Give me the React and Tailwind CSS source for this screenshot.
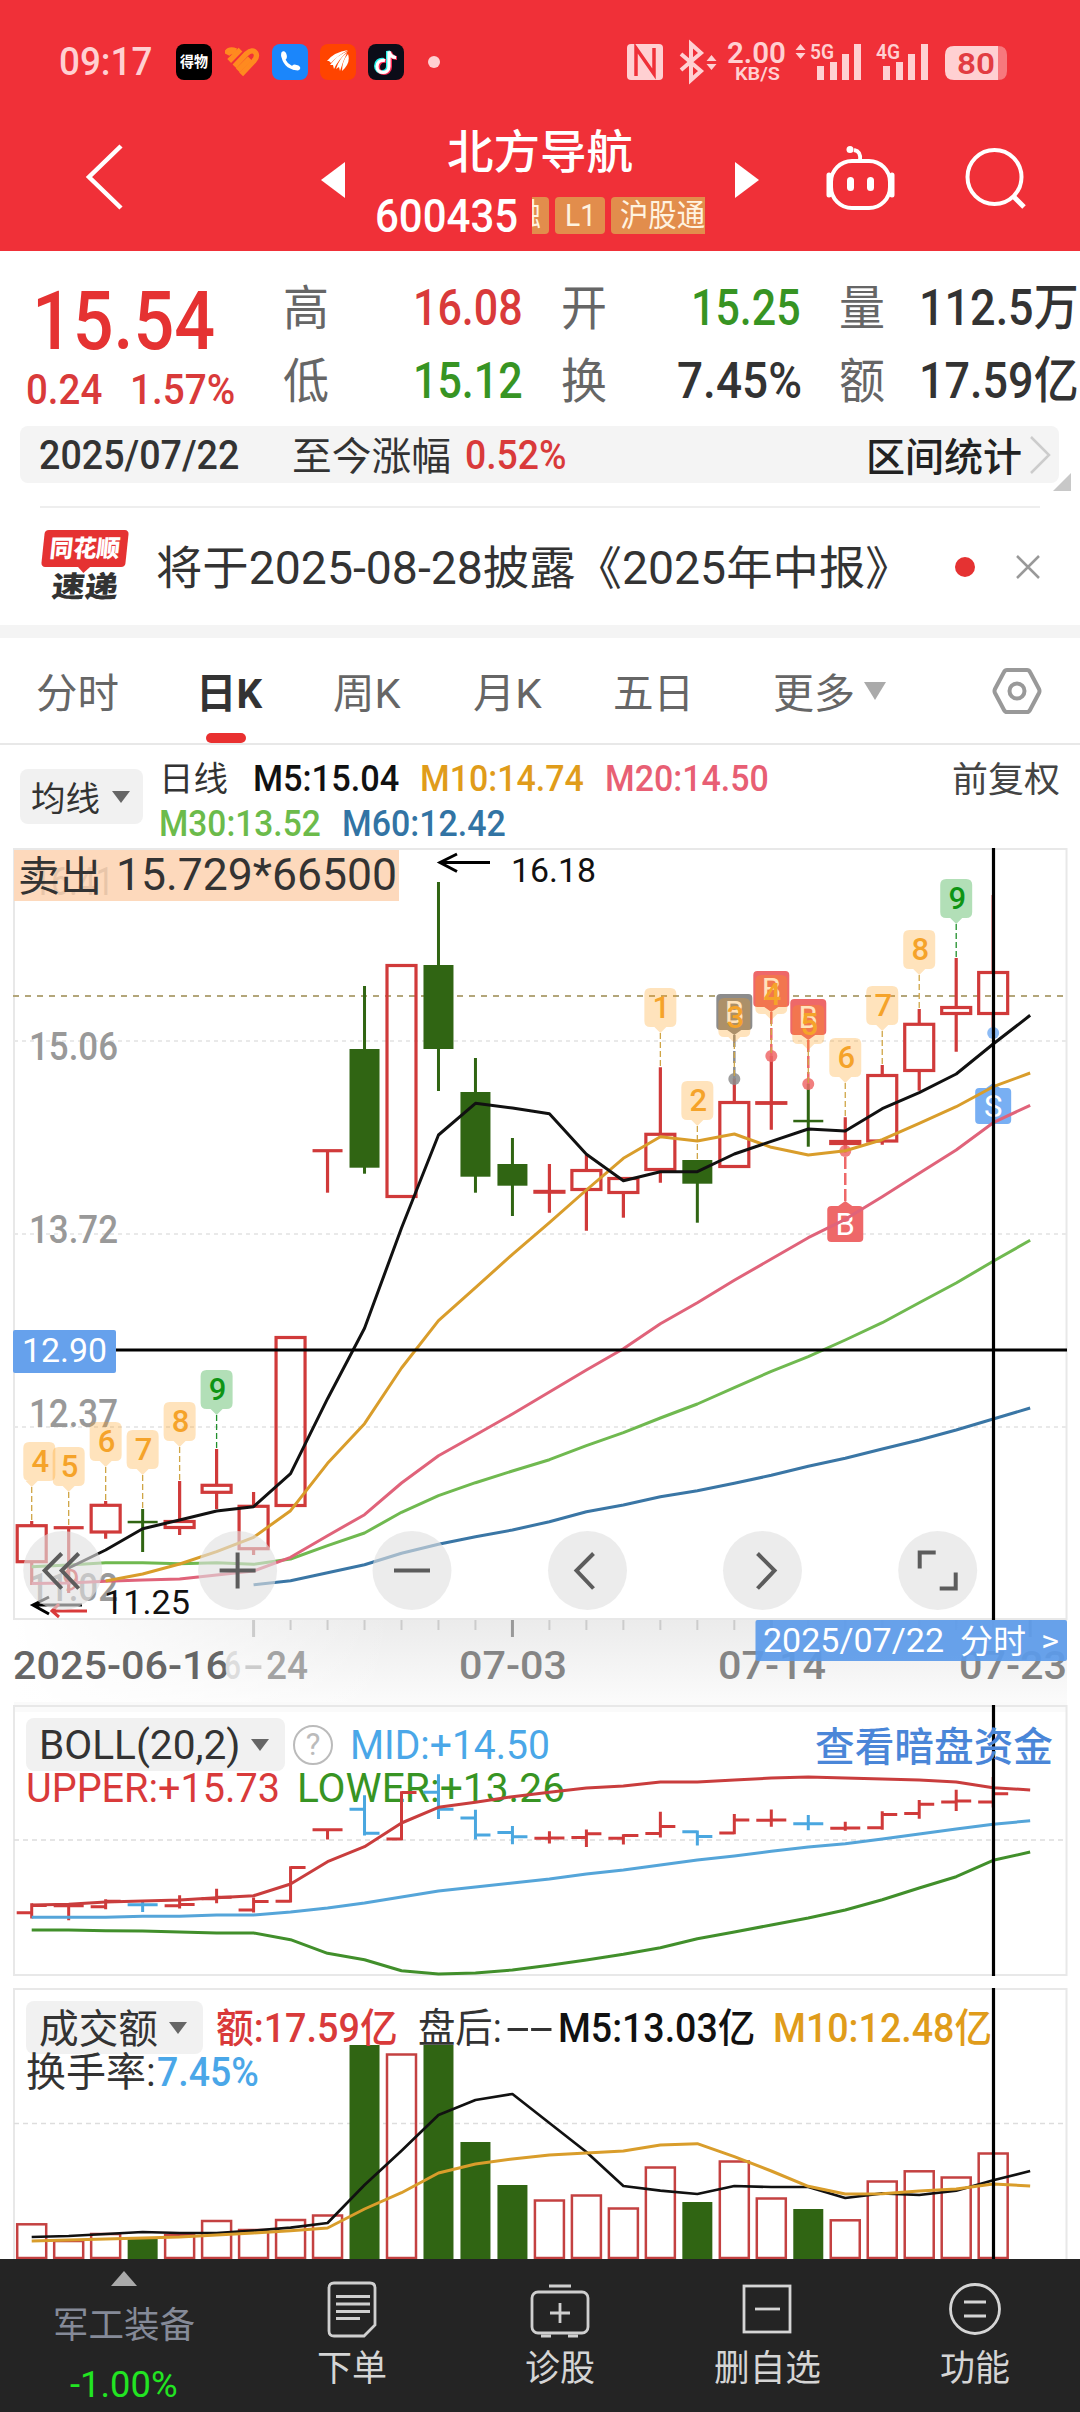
import React, { useLayoutEffect, useRef } from "react";
import clsx from "clsx";

// ---------- data ----------

const STEP = 36.98;
const X0 = 31.7;
const cx = (i) => X0 + STEP * i;

// [direction, high, top, bottom, low]
const candles = [
  ["up", 1521, 1525.7, 1561.7, 1585],
  ["up", 1527.7, 1527.7, 1527.7, 1593],
  ["up", 1501, 1505.3, 1532, 1538.7],
  ["down", 1509, 1522, 1522, 1552],
  ["up", 1481, 1521.5, 1527.5, 1535],
  ["up", 1449, 1485.3, 1492.3, 1509],
  ["up", 1492, 1506.3, 1548.7, 1555],
  ["up", 1337.5, 1337.5, 1505.5, 1505.5],
  ["up", 1150.7, 1150.7, 1150.7, 1192.7],
  ["down", 986, 1049, 1167.7, 1173.7],
  ["up", 965.5, 965.5, 1196.5, 1196.5],
  ["down", 882, 965, 1049, 1091],
  ["down", 1058, 1092, 1176.7, 1192.7],
  ["down", 1138, 1164, 1185.7, 1216],
  ["up", 1164, 1191.4, 1192.2, 1212.7],
  ["up", 1155, 1170.5, 1189.5, 1230.7],
  ["up", 1178.5, 1178.5, 1192.5, 1217.7],
  ["up", 1067.3, 1134.3, 1169.5, 1182.7],
  ["down", 1160, 1160, 1183.7, 1222.7],
  ["up", 1078, 1102.5, 1166.5, 1166.5],
  ["up", 1056, 1102.7, 1103.3, 1129.7],
  ["down", 1084, 1121, 1121, 1146.7],
  ["up", 1117.3, 1141.5, 1143.5, 1150],
  ["up", 1065, 1075.5, 1141, 1144.7],
  ["up", 1009, 1024.3, 1070.5, 1090.7],
  ["up", 958, 1007.5, 1013.5, 1051.7],
  ["up", 895, 972.5, 1013.5, 1034],
];

const ma5 = [1580, 1568, 1550, 1528.7, 1520, 1511, 1506.7, 1473.7, 1398.7, 1328.3, 1228, 1135, 1103.3, 1108, 1113.7, 1154.3, 1180.7, 1171.7, 1171.7, 1154, 1141.3, 1129, 1131, 1108.7, 1092.7, 1074, 1044, 1015.3];
const ma10 = [1581, 1574, 1564, 1551.7, 1537.3, 1510.7, 1463.3, 1423.7, 1368, 1320.7, 1287.7, 1254.3, 1222.7, 1190, 1158.3, 1136.7, 1141, 1134, 1147.3, 1155, 1150.7, 1139.7, 1123.3, 1106.7, 1086.7, 1073];
const ma20 = [1583.5, 1583, 1581.3, 1580, 1579, 1575, 1571, 1557.3, 1535.7, 1514.7, 1483, 1455.7, 1435, 1414, 1392, 1370, 1348.7, 1323.7, 1302.7, 1280.3, 1259, 1237.7, 1219.3, 1196.7, 1173.3, 1150, 1122.7, 1105.3];
const ma30 = [1566.7, 1565, 1562.7, 1562.7, 1563.7, 1562.7, 1564.3, 1559, 1545.7, 1533, 1512.3, 1495.7, 1482.7, 1471, 1459.7, 1445.7, 1432.7, 1418, 1404, 1387.7, 1371.3, 1356.7, 1340, 1322.7, 1302.7, 1283, 1261.3, 1240.3];
const ma60 = [1584.7, 1580.7, 1572.7, 1564.7, 1553.3, 1544.3, 1536.7, 1530, 1521.7, 1511.7, 1505, 1496.7, 1490.7, 1483.3, 1475.3, 1466.3, 1458.3, 1449, 1440, 1430, 1419, 1408];

const bollUp = [1905, 1904.3, 1902, 1901, 1900, 1897.7, 1895.7, 1884, 1861.7, 1846.7, 1823, 1807.3, 1802.3, 1796.7, 1792.3, 1788, 1786, 1782, 1782, 1780, 1778, 1777, 1778, 1779, 1780, 1782, 1787.7, 1790];
const bollMid = [1917.3, 1917.3, 1917.3, 1916.3, 1916.3, 1915, 1915, 1912, 1908, 1903, 1897, 1891, 1887, 1883, 1879, 1874, 1870, 1865, 1860, 1856, 1851.3, 1847, 1843.7, 1839, 1834, 1829, 1824.3, 1820.7];
const bollLow = [1930, 1930, 1930.7, 1931, 1932, 1933, 1933, 1939.7, 1953.3, 1959.7, 1970.7, 1974, 1973, 1970, 1965.3, 1960, 1954.3, 1947.7, 1938.7, 1932, 1925, 1918, 1910, 1899.7, 1888, 1876.7, 1860.3, 1852];

const volTops = [2224.3, 2241, 2234, 2239, 2235, 2221, 2230, 2220, 2215.5, 2045, 2054.5, 2045, 2142, 2185, 2200.5, 2195.5, 2208.5, 2167.5, 2202, 2161.5, 2198.5, 2209, 2220.3, 2181.5, 2171.3, 2177.5, 2153.5];
const volMa5 = [2237, 2236, 2234, 2232, 2233, 2233, 2230.7, 2227.7, 2223, 2185, 2150.7, 2115, 2100, 2094, 2123, 2152, 2186, 2190.7, 2194, 2186, 2187, 2187, 2198, 2193.3, 2195, 2190.7, 2180.3, 2171];
const volMa10 = [2241, 2240, 2239, 2238, 2237, 2235, 2233, 2230.7, 2228, 2209, 2192.7, 2173, 2164, 2159, 2155, 2153, 2151, 2145, 2143.7, 2156.7, 2171, 2186.3, 2194, 2193.7, 2191, 2189, 2184, 2186];

// nine-turn sequence marks: [candle, label, top of bubble]
const turns = [
  [0, "4", 1442], [1, "5", 1447], [2, "6", 1422], [3, "7", 1430], [4, "8", 1402], [5, "9", 1370],
  [17, "1", 988], [18, "2", 1081], [19, "3", 998], [20, "4", 975], [21, "5", 1005],
  [22, "6", 1038], [23, "7", 986], [24, "8", 930], [25, "9", 879],
];

// ---------- helpers ----------

// squeezes its text into the width given by the class name
function Fit({ className, children }) {
  const box = useRef(null);
  const inner = useRef(null);
  useLayoutEffect(() => {
    const s = box.current.clientWidth / inner.current.offsetWidth;
    inner.current.style.transform = `scaleX(${s})`;
  });
  return (
    <span ref={box} className={clsx("inline-flex shrink-0 leading-none", className)}>
      <span ref={inner} className="origin-left whitespace-nowrap">{children}</span>
    </span>
  );
}

function Label({ x, y, w, size, fill, weight = 400, children, opacity }) {
  return (
    <text x={x} y={y} fontSize={size} fill={fill} fontWeight={weight} opacity={opacity} textLength={w} lengthAdjust="spacingAndGlyphs">
      {children}
    </text>
  );
}

function Line({ data, from = 0, color, w = 3 }) {
  const points = data.map((y, i) => `${cx(i + from)},${y}`).join(" ");
  return <polyline points={points} fill="none" stroke={color} strokeWidth={w} strokeLinejoin="round" />;
}

function Caret({ className = "text-[#666]" }) {
  return (
    <svg width="18" height="12" viewBox="0 0 18 12" className={className}>
      <path d="M0 0h18L9 12z" fill="currentColor" />
    </svg>
  );
}

// ---------- top ----------

function StatusBar() {
  return (
    <div className="flex h-[124px] items-center pl-[59px] text-[#ffd0d2]">
      <Fit className="w-[93px] text-[38px] font-medium">09:17</Fit>
      <div className="ml-[24px] flex h-[36px] w-[36px] items-center justify-center rounded-[8px] bg-black text-white">
        <Fit className="w-[28px] text-[15px] font-bold">得物</Fit>
      </div>
      <svg className="ml-[13px]" width="35" height="30" viewBox="176 42 104 90">
        <g stroke="#ff8a1f" strokeWidth="16" strokeLinecap="butt" strokeLinejoin="round" fill="none">
          <path d="M180 64Q188 48 208 56" strokeWidth="20" />
          <path d="M188 84L222 50" />
          <path d="M204 100L240 62Q258 46 268 60Q274 72 262 84L224 124" />
          <path d="M214 112L250 76" />
        </g>
      </svg>
      <div className="ml-[12px] flex h-[36px] w-[36px] items-center justify-center rounded-[8px] bg-[#1b86fb]">
        <svg width="22" height="22" viewBox="0 0 22 22">
          <path d="M4 4C4.500 11 9 16.500 17.500 17.500" fill="none" stroke="#fff" strokeWidth="3.400" />
          <ellipse cx="5" cy="4.500" rx="2.700" ry="4.300" fill="#fff" transform="rotate(-14 5 4.500)" />
          <ellipse cx="17" cy="16.500" rx="4.300" ry="2.700" fill="#fff" transform="rotate(14 17 16.500)" />
        </svg>
      </div>
      <div className="ml-[12px] flex h-[36px] w-[36px] items-center justify-center rounded-[8px] bg-[#ff4400]">
        <svg width="24" height="26" viewBox="0 0 24 26" fill="#fff">
          <path d="M1 12Q8 3 22 1Q11 7 5 14L3 12z" />
          <path d="M4 16Q11 6 22 2Q12 11 8 20L7 16z" />
          <path d="M10 20Q14 8 21 4Q17 12 14 22L13 18z" />
          <path d="M16 22Q16 12 22 5Q25 14 16 22z" />
        </svg>
      </div>
      <div className="ml-[12px] flex h-[36px] w-[36px] items-center justify-center rounded-[8px] bg-[#0b0c18]">
        <svg width="26" height="28" viewBox="0 0 26 28" fill="none" strokeWidth="4">
          <path d="M11 12c-5-1-8 2-8 6s3 6 6 6 6-2 6-6V3c1 4 4 6 7 6" stroke="#25f4ee" />
          <path d="M13 13c-5-1-8 2-8 6s3 6 6 6 6-2 6-6V4c1 4 4 6 7 6" stroke="#fe2c55" />
          <path d="M12 12.500c-5-1-8 2-8 6s3 6 6 6 6-2 6-6V3.500c1 4 4 6 7 6" stroke="#fff" strokeWidth="3.200" />
        </svg>
      </div>
      <div className="ml-[24px] h-[12px] w-[12px] rounded-full bg-[#ffd0d2]" />

      <svg className="ml-[187px] overflow-visible" width="380" height="40" viewBox="627 42 380 40" fill="#ffd0d2">
        <rect x="627" y="44" width="36" height="36" rx="4" />
        <path d="M636 76V48l18 26V48" fill="none" stroke="#ef3038" strokeWidth="3.500" />
        <path d="M681 54l20 17-10 9V44l10 9-20 17" fill="none" stroke="#ffd0d2" strokeWidth="4" />
        <path d="M711.500 55l5 6h-10zM711.500 70l5-6h-10z" />
        <Label x="727" y="63" w="59" size="29" fill="#ffd0d2" weight="600">2.00</Label>
        <Label x="735" y="80" w="45" size="19" fill="#ffd0d2" weight="600">KB/S</Label>
        <path d="M800.500 44l5 6h-10zM800.500 59l5-6h-10z" />
        <Label x="810" y="59" w="24" size="21" fill="#ffd0d2" weight="600">5G</Label>
        <path d="M817 66h7v14h-7zM830 62h7v18h-7zM842 54h7v26h-7zM854 44h7v36h-7z" />
        <Label x="876" y="59" w="24" size="21" fill="#ffd0d2" weight="600">4G</Label>
        <path d="M883 66h7v14h-7zM896 62h7v18h-7zM908 54h7v26h-7zM921 44h7v36h-7z" />
        <path d="M990 46h8q9 0 9 9v16q0 9-9 9h-8z" opacity=".45" />
        <path d="M954 46h44v34h-44q-9 0-9-9V55q0-9 9-9z" />
        <Label x="957" y="74" w="38" size="30" fill="#e23c42" weight="600">80</Label>
      </svg>
    </div>
  );
}

function Header() {
  return (
    <header className="h-[251px] bg-[#f03038]">
      <StatusBar />
      <div className="flex h-[127px] text-white">
        <svg className="ml-[84px] mt-[20px]" width="40" height="66" viewBox="84 144 40 66">
          <path d="M121 146L89 177l32 31" fill="none" stroke="#fff" strokeWidth="4.500" />
        </svg>
        <svg className="ml-[197px] mt-[38px]" width="24" height="36" viewBox="0 0 24 36">
          <path d="M24 0v36L0 18z" fill="#fff" />
        </svg>
        <div className="ml-[30px] flex w-[331px] flex-col">
          <Fit className="ml-[72px] mt-[5px] w-[186px] text-[46px] font-medium">北方导航</Fit>
          <div className="mt-[18px] flex h-[44px] items-center">
            <Fit className="w-[143px] text-[47px] font-medium">600435</Fit>
            <div className="ml-[14px] flex gap-[6px] text-[31px] text-[#fff3e0]">
              <div className="flex h-[37px] w-[17px] items-center justify-end overflow-hidden rounded-r-[4px] bg-[#e28d4c] pr-[8px]">融</div>
              <div className="flex h-[37px] w-[50px] items-center justify-center rounded-[4px] bg-[#e28d4c]">
                <Fit className="w-[31px]">L1</Fit>
              </div>
              <div className="flex h-[37px] w-[94px] items-center rounded-l-[4px] bg-[#e28d4c] pl-[9px]">
                <Fit className="w-[85px]">沪股通</Fit>
              </div>
            </div>
          </div>
        </div>
        <svg className="ml-[29px] mt-[38px]" width="24" height="36" viewBox="0 0 24 36">
          <path d="M0 0v36l24-18z" fill="#fff" />
        </svg>
        <svg className="ml-[65px] mt-[20px]" width="72" height="68" viewBox="824 144 72 68" fill="none" stroke="#fff" strokeWidth="4">
          <rect x="831" y="161" width="59" height="47" rx="21" />
          <path d="M829 175v20M892 175v20" strokeWidth="5" strokeLinecap="round" />
          <path d="M860 161c1-7-1-10-6-11" />
          <circle cx="850" cy="149.500" r="3.500" fill="#fff" stroke="none" />
          <rect x="847" y="177" width="7" height="14" rx="3.500" fill="#fff" stroke="none" />
          <rect x="867" y="177" width="7" height="14" rx="3.500" fill="#fff" stroke="none" />
        </svg>
        <svg className="ml-[68px] mt-[22px]" width="64" height="64" viewBox="964 146 64 64" fill="none" stroke="#fff" strokeWidth="4">
          <circle cx="994.500" cy="177" r="27" />
          <path d="M1013 196l11 11" strokeWidth="5" />
        </svg>
      </div>
    </header>
  );
}

function Quote() {
  return (
    <div className="flex h-[175px] font-medium">
      <div className="w-[283px] text-[#e53232]">
        <Fit className="ml-[32px] mt-[29px] w-[183px] text-[82px]">15.54</Fit>
        <div className="mt-[7px] flex">
          <Fit className="ml-[26px] w-[76px] text-[42px] text-[#d93a3a]">0.24</Fit>
          <Fit className="ml-[28px] w-[105px] text-[42px] text-[#d93a3a]">1.57%</Fit>
        </div>
      </div>
      <div className="mt-[32px] grid h-[145px] shrink-0 grid-cols-[130px_148px_116px_162px_79px_160px] grid-rows-[73px_72px] text-[50px] text-[#333]">
        <Fit className="mt-[2px] w-[46px] text-[48px] font-normal text-[#666]">高</Fit>
        <Fit className="w-[110px] text-[#d93a3a]">16.08</Fit>
        <Fit className="mt-[2px] w-[46px] text-[48px] font-normal text-[#666]">开</Fit>
        <Fit className="ml-[14px] w-[110px] text-[#379423]">15.25</Fit>
        <Fit className="mt-[2px] w-[46px] text-[48px] font-normal text-[#666]">量</Fit>
        <Fit className="ml-px w-[160px]">112.5万</Fit>
        <Fit className="mt-[2px] w-[46px] text-[48px] font-normal text-[#666]">低</Fit>
        <Fit className="w-[110px] text-[#379423]">15.12</Fit>
        <Fit className="mt-[2px] w-[46px] text-[48px] font-normal text-[#666]">换</Fit>
        <Fit className="w-[125px]">7.45%</Fit>
        <Fit className="mt-[2px] w-[46px] text-[48px] font-normal text-[#666]">额</Fit>
        <Fit className="ml-px w-[160px]">17.59亿</Fit>
      </div>
    </div>
  );
}

function RangeBar() {
  return (
    <div className="relative ml-[20px] flex h-[57px] w-[1039px] items-center rounded-[8px] bg-[#f4f4f4] text-[#333]">
      <Fit className="ml-[19px] mt-[2px] w-[200px] text-[41px] font-medium">2025/07/22</Fit>
      <Fit className="ml-[53px] mt-[5px] w-[159px] text-[39px]">至今涨幅</Fit>
      <Fit className="ml-[14px] mt-[2px] w-[102px] text-[41px] font-medium text-[#d93a3a]">0.52%</Fit>
      <Fit className="ml-[299px] mt-[8px] w-[156px] text-[39px] font-medium text-[#222]">区间统计</Fit>
      <svg className="ml-[8px]" width="22" height="38" viewBox="0 0 22 38">
        <path d="M1 1l18 18L1 37" fill="none" stroke="#ccc" strokeWidth="2.500" />
      </svg>
      <svg className="absolute -right-[12px] -bottom-[8px]" width="18" height="18" viewBox="0 0 18 18">
        <path d="M18 0v18H0z" fill="#c8c8c8" />
      </svg>
    </div>
  );
}

function News() {
  return (
    <div className="mt-[23px] h-[119px]">
      <div className="mx-[40px] h-[2px] bg-[#eee]" />
      <div className="flex h-[117px] items-center">
        <div className="ml-[41px] flex w-[88px] flex-col items-center">
          <div className="relative mt-[-2px] flex h-[37px] w-[84px] -skew-x-6 items-center justify-center rounded-[4px] bg-[#e53232]">
            <Fit className="w-[70px] text-[24px] font-black text-white">同花顺</Fit>
            <svg className="absolute top-[36px] left-[36px]" width="14" height="7" viewBox="0 0 14 7">
              <path d="M0 0h14L7 7z" fill="#e53232" />
            </svg>
          </div>
          <Fit className="mt-[6px] w-[66px] -skew-x-6 text-[29px] font-black text-[#333]">速递</Fit>
        </div>
        <Fit className="ml-[27px] mt-[2px] w-[756px] text-[46px] text-[#333]">将于2025-08-28披露《2025年中报》</Fit>
        <div className="ml-[43px] h-[20px] w-[20px] rounded-full bg-[#e53232]" />
        <svg className="ml-[41px]" width="24" height="24" viewBox="0 0 24 24">
          <path d="M1 1l22 22M23 1L1 23" stroke="#999" strokeWidth="2.500" />
        </svg>
      </div>
    </div>
  );
}

function Tabs() {
  return (
    <div className="border-t-[13px] border-[#f4f4f4]">
      <nav className="flex h-[107px] items-center border-b-2 border-[#e8e8e8] text-[41px] text-[#666]">
        <Fit className="ml-[36px] mt-[7px] w-[83px]">分时</Fit>
        <div className="relative ml-[77px] flex h-full items-center">
          <Fit className="mt-[7px] w-[66px] font-bold text-[#333]">日K</Fit>
          <div className="absolute bottom-0 left-[10px] h-[10px] w-[40px] rounded-[5px] bg-[#e93030]" />
        </div>
        <Fit className="ml-[71px] mt-[7px] w-[68px]">周K</Fit>
        <Fit className="ml-[72px] mt-[7px] w-[69px]">月K</Fit>
        <Fit className="ml-[71px] mt-[7px] w-[81px]">五日</Fit>
        <Fit className="ml-[79px] mt-[7px] w-[82px]">更多</Fit>
        <svg className="ml-[9px]" width="22" height="18" viewBox="0 0 22 18">
          <path d="M0 0h22L11 18z" fill="#aaa" />
        </svg>
        <svg className="ml-[106px]" width="50" height="48" viewBox="0 0 50 48" fill="none" stroke="#999" strokeWidth="4">
          <path d="M15 3h20q2 0 3 2l9 17q1 2 0 4l-9 17q-1 2-3 2H15q-2 0-3-2L3 26q-1-2 0-4l9-17q1-2 3-2z" />
          <circle cx="25" cy="24" r="7.500" />
        </svg>
      </nav>
    </div>
  );
}

function MaLegend() {
  return (
    <div className="flex h-[99px] text-[36px] font-medium">
      <div className="ml-[20px] mt-[24px] flex h-[55px] w-[123px] items-center rounded-[8px] bg-[#f1f1f1]">
        <Fit className="ml-[11px] mt-[4px] w-[69px] text-[34px] font-normal text-[#333]">均线</Fit>
        <Caret className="ml-[12px] text-[#666]" />
      </div>
      <div className="ml-[16px] mt-[16px] w-[620px]">
        <div className="flex h-[45px] items-start">
          <Fit className="mt-px w-[69px] text-[34px] font-normal text-[#333]">日线</Fit>
          <Fit className="ml-[25px] w-[146px] text-[#111]">M5:15.04</Fit>
          <Fit className="ml-[21px] w-[164px] text-[#e09c1a]">M10:14.74</Fit>
          <Fit className="ml-[21px] w-[164px] text-[#e85f74]">M20:14.50</Fit>
        </div>
        <div className="flex">
          <Fit className="w-[162px] text-[#6cbb4b]">M30:13.52</Fit>
          <Fit className="ml-[21px] w-[164px] text-[#3274a4]">M60:12.42</Fit>
        </div>
      </div>
      <Fit className="ml-auto mr-[20px] mt-[18px] w-[108px] text-[35px] font-normal text-[#444]">前复权</Fit>
    </div>
  );
}

// ---------- charts ----------

function Candle({ i, row }) {
  const [dir, high, top, bottom, low] = row;
  const x = cx(i);
  if (dir === "down") {
    const h = Math.max(bottom - top, 2.5);
    return (
      <g fill="#306513">
        <rect x={x - 1.5} y={high} width="3" height={low - high} />
        <rect x={x - 15} y={bottom === top ? top - 1.2 : top} width="30" height={h} />
      </g>
    );
  }
  return (
    <g stroke="#d03a3a" strokeWidth="3.200" fill="none">
      <path d={`M${x} ${high}V${top}M${x} ${bottom}V${low}`} />
      {bottom === top ? <path d={`M${x - 15} ${top}h30`} /> : <rect x={x - 14.5} y={top} width="29" height={bottom - top} />}
    </g>
  );
}

function Turn({ i, label, top }) {
  const green = label === "9";
  const x = cx(i);
  const bx = Math.max(x, 39.3);
  const tip = top + 45;
  return (
    <g>
      <path d={`M${x} ${tip}V${candles[i][1]}`} stroke={green ? "#1f8f2b" : "#cfa546"} strokeWidth="1.300" strokeDasharray="6 3" />
      <g fill={green ? "#0e9a1e" : "#ff9a10"} fillOpacity={green ? 0.32 : 0.28}>
        <path d={`M${bx - 10} ${top}h20q6 0 6 6v27q0 6-6 6H${x + 6}l-6 6l-6-6H${bx - 10}q-6 0-6-6v-27q0-6 6-6z`} />
      </g>
      <text x={bx + 1} y={top + 30} fontSize="31" fontWeight="500" textAnchor="middle" fill={green ? "#0e9414" : "#f5a32a"}>
        {label}
      </text>
    </g>
  );
}

function Trade({ i, label, top, dot, color, below, dashed = true }) {
  const x = cx(i);
  const tip = below ? top - 5 : top + 41;
  return (
    <g>
      {dashed && <path d={`M${x} ${tip}V${dot}`} stroke={color} strokeWidth="2.500" strokeDasharray="12 4" />}
      <circle cx={x} cy={dot} r="6" fill={color} opacity=".85" />
      <rect x={x - 18} y={top} width="36" height="36" rx="4" fill={color} />
      <path d={below ? `M${x - 7} ${top}l7-5 7 5z` : `M${x - 7} ${top + 36}l7 5 7-5z`} fill={color} />
      <text x={x} y={top + 29} fontSize="31" textAnchor="middle" fill="#fff">{label}</text>
    </g>
  );
}

function RoundButton({ x, children }) {
  return (
    <g>
      <circle cx={x} cy="1570.500" r="39.500" fill="#e0e0e0" opacity=".62" />
      <g transform={`translate(${x} 1570.5)`} fill="none" stroke="#5c5c5c" strokeWidth="4">{children}</g>
    </g>
  );
}

function KChart() {
  return (
    <svg width="1080" height="858" viewBox="0 844 1080 858" className="block">
      <defs>
        <linearGradient id="fadeY" x1="0" y1="0" x2="0" y2="1">
          <stop offset="0" stopColor="#ebebeb" />
          <stop offset="1" stopColor="#fbfbfb" />
        </linearGradient>
        <linearGradient id="fadeX" x1="0" y1="0" x2="1" y2="0">
          <stop offset="0" stopColor="#fff" />
          <stop offset="1" stopColor="#fff" stopOpacity="0" />
        </linearGradient>
      </defs>
      <rect x="14" y="1619" width="1053" height="83" fill="url(#fadeY)" />
      <rect x="14" y="1619" width="380" height="83" fill="url(#fadeX)" />
      <rect x="14" y="849" width="1052.500" height="770" fill="none" stroke="#e8e8e8" strokeWidth="2" />
      <g stroke="#e9e9e9" strokeWidth="2" strokeDasharray="4 4">
        <path d="M14 1041H1066M14 1234H1066M14 1427H1066" />
      </g>
      <path d="M13 996H1066" stroke="#b3a67a" strokeWidth="2" strokeDasharray="6 6" />

      <g>
        <Label x="29" y="1060" w="89" size="39" weight="500" fill="#999">15.06</Label>
        <Label x="29" y="1243" w="89" size="39" weight="500" fill="#999">13.72</Label>
        <Label x="29" y="1427" w="89" size="39" weight="500" fill="#999">12.37</Label>
        <Label x="29" y="1601" w="89" size="39" weight="500" fill="#999">11.02</Label>
      </g>

      {candles.map((row, i) => <Candle key={i} i={i} row={row} />)}
      <Label x="62" y="1591" w="18" size="32" fill="#d93a3a">9</Label>

      <Trade i={19} label="B" top={994} dot={1079} color="#8c8c8c" />
      <Trade i={20} label="B" top={971} dot={1056} color="#ee6869" />
      <Trade i={21} label="B" top={999} dot={1084} color="#ee6869" />
      <Trade i={22} label="B" top={1206} dot={1151} color="#ee6869" below />
      <Trade i={26} label="S" top={1088} dot={1033} color="#78aff3" below dashed={false} />
      {turns.map(([i, label, top]) => <Turn key={i} i={i} label={label} top={top} />)}

      <Line data={ma60} from={6} color="#3a76a5" />
      <Line data={ma30} color="#70b950" />
      <Line data={ma20} color="#e0637a" />
      <Line data={ma10} from={2} color="#d99d2b" />
      <Line data={ma5.slice(1)} from={1} color="#111" />

      {/* highest / lowest marks */}
      <path d="M490 862.500H440M457 854L440 862.500l17 9" fill="none" stroke="#000" strokeWidth="3" />
      <Label x="511" y="882" w="85" size="33" fill="#111">16.18</Label>
      <path d="M82 1605H33M49 1597l-16 8 16 9" fill="none" stroke="#000" strokeWidth="3" />
      <path d="M87 1611H52M59 1604l-7 7 7 6" fill="none" stroke="#d93a3a" strokeWidth="3" />
      <Label x="104" y="1614" w="86" size="33" fill="#111">11.25</Label>

      {/* sell order */}
      <rect x="14" y="850" width="385" height="51" fill="#fdd9bc" />
      <Label x="33" y="895" w="81" size="39" fill="#e8c5a9">16.41</Label>
      <Label x="18" y="891" w="84" size="41" fill="#333">卖出</Label>
      <Label x="116" y="890" w="281" size="45" fill="#333">15.729*66500</Label>

      {/* cross cursor */}
      <path d="M116 1350H1067M993.500 848V1620" stroke="#000" strokeWidth="3.200" />
      <rect x="13" y="1330" width="103" height="43" rx="2" fill="#66a1ec" />
      <Label x="22" y="1362" w="85" size="33" fill="#fff">12.90</Label>

      <RoundButton x={62.7}>
        <path d="M-1 -17L-18 0l17 18M16 -17L-1 0l17 18" />
      </RoundButton>
      <RoundButton x={237.600}>
        <path d="M-18 0H18M0 -18V18" />
      </RoundButton>
      <RoundButton x={412}>
        <path d="M-18 0H18" />
      </RoundButton>
      <RoundButton x={587.500}>
        <path d="M6 -17L-11 0l17 18" />
      </RoundButton>
      <RoundButton x={762.500}>
        <path d="M-5 -17L12 0l-17 18" />
      </RoundButton>
      <RoundButton x={937.700}>
        <path d="M-2 -18H-18V-2M2 18H18V2" />
      </RoundButton>

      {/* time axis */}
      {Array.from({ length: 22 }, (_, k) => k + 6).map((i) => {
        const long = (i + 1) % 7 === 0;
        return <path key={i} d={`M${cx(i)} 1620v${long ? 17 : 10}`} stroke={long && i > 6 ? "#999" : "#ccc"} strokeWidth={long ? 3 : 2} />;
      })}
      <Label x="13" y="1679" w="216" size="39" weight="500" fill="#666">2025-06-16</Label>
      <Label x="224" y="1679" w="17" size="39" weight="500" fill="#ddd">6</Label>
      <Label x="243" y="1679" w="21" size="39" weight="500" fill="#ccc">-</Label>
      <Label x="266" y="1679" w="42" size="39" weight="500" fill="#a3a3a3">24</Label>
      <Label x="459" y="1679" w="108" size="39" weight="500" fill="#858585">07-03</Label>
      <Label x="718" y="1679" w="108" size="39" weight="500" fill="#858585">07-14</Label>
      <Label x="959" y="1679" w="108" size="39" weight="500" fill="#858585">07-23</Label>
      <rect x="755.500" y="1620" width="311.500" height="41" rx="2" fill="#5c9bea" opacity=".93" />
      <Label x="763" y="1652" w="181" size="33" fill="#fff">2025/07/22</Label>
      <Label x="960" y="1653" w="66" size="33" fill="#fff">分时</Label>
      <Label x="1041" y="1651" w="18" size="30" fill="#fff">&gt;</Label>
    </svg>
  );
}

function BollPanel() {
  const by = (y) => 1792.3 + (y - 965) * 0.2018;
  return (
    <div className="relative h-[278px]">
      <svg width="1080" height="278" viewBox="0 1702 1080 278" className="block">
        <rect x="14" y="1702" width="1053" height="10" fill="#fafafa" />
        <rect x="14" y="1706" width="1052.500" height="269" fill="none" stroke="#e8e8e8" strokeWidth="2" />
        <path d="M14 1840H1066" stroke="#ddd" strokeWidth="1.500" strokeDasharray="5 4" />
        <Label x="26" y="1802" w="254" size="40" fill="#d93a3a">UPPER:+15.73</Label>
        <Label x="297" y="1802" w="268" size="40" fill="#379423">LOWER:+13.26</Label>
        {candles.map(([dir, high, top, bottom, low], i) => {
          const open = by(dir === "up" ? bottom : top);
          const close = by(dir === "up" ? top : bottom);
          const x = cx(i);
          return (
            <path
              key={i}
              d={`M${x - 15} ${open}H${x}M${x} ${close}H${x + 15}M${x} ${by(high) - 1.2}V${by(low) + 1.2}`}
              stroke={dir === "up" ? "#d03a3a" : "#4aa7e0"}
              strokeWidth="3"
            />
          );
        })}
        <Line data={bollUp} color="#c93d3d" />
        <Line data={bollMid} color="#55a5d9" />
        <Line data={bollLow} color="#418f2b" />
        <path d="M993.500 1705V1976" stroke="#000" strokeWidth="3.200" />
      </svg>
      <div className="absolute top-[16px] left-[26px] flex h-[53px] w-[1040px] items-center">
        <div className="flex h-[53px] w-[259px] items-center rounded-[8px] bg-[#f1f1f1]">
          <Fit className="ml-[13px] mt-[3px] w-[201px] text-[40px] text-[#333]">BOLL(20,2)</Fit>
          <Caret className="ml-[11px] text-[#666]" />
        </div>
        <div className="ml-[8px] flex h-[40px] w-[40px] items-center justify-center rounded-full border-[2.5px] border-[#bbb] text-[31px] leading-none text-[#bbb]">?</div>
        <Fit className="ml-[17px] mt-[2px] w-[200px] text-[40px] text-[#4aa7e8]">MID:+14.50</Fit>
        <Fit className="ml-[265px] mt-[6px] w-[238px] text-[40px] font-medium text-[#4a86d8]">查看暗盘资金</Fit>
      </div>
    </div>
  );
}

function VolumePanel() {
  return (
    <div className="relative h-[279px]">
      <svg width="1080" height="279" viewBox="0 1980 1080 279" className="block">
        <path d="M14 2260V1989H1066.500V2260" fill="none" stroke="#e8e8e8" strokeWidth="2" />
        <path d="M14 2123.500H1066" stroke="#ddd" strokeWidth="1.500" strokeDasharray="5 4" />
        {volTops.map((y, i) =>
          candles[i][0] === "down" ? (
            <rect key={i} x={cx(i) - 15} y={y} width="30" height={2259 - y} fill="#306513" />
          ) : (
            <rect key={i} x={cx(i) - 14.500} y={y} width="29" height={2258 - y} fill="none" stroke="#c44141" strokeWidth="2.500" />
          )
        )}
        <Line data={volMa5} color="#111" w={2.700} />
        <Line data={volMa10} color="#d99d2b" />
        <path d="M993.500 1988V2259" stroke="#000" strokeWidth="3.200" />
      </svg>
      <div className="absolute top-[21px] left-[26px] w-[1040px] text-[40px] font-medium">
        <div className="flex h-[53px] items-center">
          <div className="flex h-[53px] w-[177px] items-center rounded-[8px] bg-[#f1f1f1]">
            <Fit className="ml-[13px] mt-[4px] w-[119px] font-normal text-[#333]">成交额</Fit>
            <Caret className="ml-[11px] text-[#666]" />
          </div>
          <Fit className="ml-[13px] mt-[2px] w-[182px] text-[#d93a3a]">额:17.59亿</Fit>
          <Fit className="ml-[20px] mt-[2px] w-[84px] font-normal text-[#333]">盘后:</Fit>
          <Fit className="ml-[4px] mt-[2px] w-[47px] font-normal text-[#333]">--</Fit>
          <Fit className="ml-[5px] mt-[2px] w-[197px] text-[#111]">M5:13.03亿</Fit>
          <Fit className="ml-[18px] mt-[2px] w-[219px] text-[#e09c1a]">M10:12.48亿</Fit>
        </div>
        <div className="-mt-px flex">
          <Fit className="w-[130px] font-normal text-[#333]">换手率:</Fit>
          <Fit className="ml-[1px] w-[102px] text-[#4aa7e8]">7.45%</Fit>
        </div>
      </div>
    </div>
  );
}

// ---------- bottom ----------

function BottomNav() {
  return (
    <footer className="flex h-[153px] bg-[#242424] text-[36px] text-[#d5d5d5]">
      <div className="flex w-[248px] flex-col items-center">
        <svg className="mt-[12px]" width="26" height="15" viewBox="0 0 26 15">
          <path d="M13 0l13 15H0z" fill="#aaa" />
        </svg>
        <Fit className="mt-[22px] w-[142px] text-[#858a98]">军工装备</Fit>
        <Fit className="mt-[23px] w-[108px] text-[#22e522]">-1.00%</Fit>
      </div>
      <div className="flex w-[208px] flex-col items-center">
        <svg className="mt-[22px]" width="52" height="58" viewBox="0 0 52 58" fill="none" stroke="#cfcfcf" strokeWidth="2.800">
          <path d="M8 2h36q5 0 5 5v37L38 55H8q-5 0-5-5V7q0-5 5-5z" />
          <path d="M10 15.500h34M10 23h34M10 30.500h34M10 37.500h24" />
        </svg>
        <Fit className="mt-[12px] w-[70px]">下单</Fit>
      </div>
      <div className="flex w-[208px] flex-col items-center">
        <svg className="mt-[24px]" width="60" height="56" viewBox="0 0 60 56" fill="none" stroke="#cfcfcf" strokeWidth="2.800">
          <rect x="2" y="9" width="56" height="41" rx="6" />
          <path d="M19 3h22M30 20v20M20 30h20M11 53h10M38 53h10" />
        </svg>
        <Fit className="mt-[12px] w-[70px]">诊股</Fit>
      </div>
      <div className="flex w-[206px] flex-col items-center">
        <svg className="mt-[24px]" width="52" height="56" viewBox="0 0 52 56" fill="none" stroke="#d5d5d5" strokeWidth="2.800">
          <rect x="3" y="3" width="46" height="46" />
          <path d="M14 26h25" />
        </svg>
        <Fit className="mt-[12px] w-[107px]">删自选</Fit>
      </div>
      <div className="flex w-[210px] flex-col items-center">
        <svg className="mt-[22px]" width="56" height="58" viewBox="0 0 56 58" fill="none" stroke="#d5d5d5" strokeWidth="2.800">
          <circle cx="28" cy="28" r="24.500" />
          <path d="M17 21h22M17 35h22" />
        </svg>
        <Fit className="mt-[12px] w-[70px]">功能</Fit>
      </div>
    </footer>
  );
}

export default function App() {
  return (
    <div className="h-[2412px] w-[1080px] overflow-hidden bg-white font-[Roboto,'Noto_Sans_CJK_SC',sans-serif]">
      <Header />
      <Quote />
      <RangeBar />
      <News />
      <Tabs />
      <MaLegend />
      <KChart />
      <BollPanel />
      <VolumePanel />
      <BottomNav />
    </div>
  );
}
